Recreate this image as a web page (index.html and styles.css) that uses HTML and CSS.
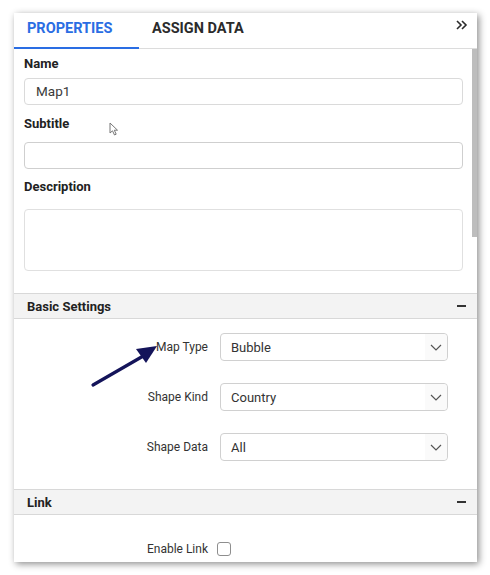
FILE: index.html
```html
<!DOCTYPE html>
<html>
<head>
<meta charset="utf-8">
<link rel="stylesheet" href="styles.css">
</head>
<body>
<div class="panel">
  <div class="tabs">
    <div class="tab active">PROPERTIES</div>
    <div class="tab">ASSIGN DATA</div>
    <svg class="collapse" width="12" height="10" viewBox="0 0 12 10"><path d="M1 1 L5 5 L1 9 M6 1 L10 5 L6 9" fill="none" stroke="#2b2b2b" stroke-width="1.6"/></svg>
  </div>
  <div class="content">
    <div class="field f-name">
      <div class="label">Name</div>
      <div class="input">Map1</div>
    </div>
    <div class="field f-sub">
      <div class="label">Subtitle</div>
      <div class="input"></div>
    </div>
    <div class="field f-desc">
      <div class="label">Description</div>
      <div class="textarea"></div>
    </div>
    <div class="section">
      <span>Basic Settings</span>
      <span class="minus"></span>
    </div>
    <div class="rows">
      <div class="row">
        <div class="rlabel">Map Type</div>
        <div class="select"><span>Bubble</span><span class="chev"><svg width="12" height="7" viewBox="0 0 12 7"><path d="M1 1 L6 6 L11 1" fill="none" stroke="#555" stroke-width="1.2"/></svg></span></div>
      </div>
      <div class="row">
        <div class="rlabel">Shape Kind</div>
        <div class="select"><span>Country</span><span class="chev"><svg width="12" height="7" viewBox="0 0 12 7"><path d="M1 1 L6 6 L11 1" fill="none" stroke="#555" stroke-width="1.2"/></svg></span></div>
      </div>
      <div class="row">
        <div class="rlabel">Shape Data</div>
        <div class="select"><span>All</span><span class="chev"><svg width="12" height="7" viewBox="0 0 12 7"><path d="M1 1 L6 6 L11 1" fill="none" stroke="#555" stroke-width="1.2"/></svg></span></div>
      </div>
    </div>
    <div class="section link">
      <span>Link</span>
      <span class="minus"></span>
    </div>
    <div class="row enable">
      <div class="rlabel">Enable Link</div>
      <div class="check"></div>
    </div>
  </div>
  <div class="thumb"></div>
</div>
<svg class="cursor" width="12" height="14" viewBox="0 0 12 14"><path d="M1 1 L1 11 L3.5 8.8 L5.5 13 L7.2 12.2 L5.3 8.2 L8.5 8.2 Z" fill="#fff" stroke="#777" stroke-width="1"/></svg>
<svg class="pointer" width="80" height="50" viewBox="0 0 80 50"><path d="M7 44 L59 14" stroke="#14145a" stroke-width="3.2" stroke-linecap="round"/><path d="M71 5 L50 8 L60 22 Z" fill="#14145a"/></svg>
</body>
</html>
```
FILE: styles.css
```css
* { box-sizing: border-box; }
body {
  margin: 0;
  background: #fff;
  font-family: Roboto, "Liberation Sans", sans-serif;
  color: #333;
  position: relative;
  width: 490px;
  height: 575px;
  overflow: hidden;
}
.panel {
  position: relative;
  margin: 13px 0 0 14px;
  width: 463px;
  height: 549px;
  background: #fff;
  box-shadow: 2px 2px 7px rgba(0,0,0,0.45);
  overflow: hidden;
}
.tabs {
  height: 36px;
  border-bottom: 1px solid #dcdcdc;
  display: flex;
  align-items: stretch;
  position: relative;
}
.tab {
  font-size: 14.5px;
  font-weight: 700;
  color: #2b2b2b;
  padding: 7px 0 0 13px;
  line-height: 18px;
}
.tab.active {
  width: 125px;
  color: #2a6de3;
  border-bottom: 2px solid #2a6de3;
  margin-bottom: -1px;
}
.collapse {
  position: absolute;
  right: 9px;
  top: 7px;
}
.content {
  width: 463px;
}
.field { padding: 0 14px 0 10px; }
.label {
  font-size: 13px;
  font-weight: 700;
  color: #222;
  line-height: 16px;
}
.f-name { padding-top: 7px; }
.f-name .label { margin-bottom: 6px; }
.f-sub { padding-top: 11px; }
.f-sub .label { margin-bottom: 10px; }
.f-desc { padding-top: 10px; }
.f-desc .label { margin-bottom: 14px; }
.input {
  height: 27px;
  border: 1px solid #dadada;
  border-radius: 4px;
  font-size: 13.5px;
  line-height: 25px;
  padding-left: 11px;
  color: #3a3a3a;
}
.f-sub .input { border-color: #cfcfcf; }
.textarea {
  height: 62px;
  border: 1px solid #e0e0e0;
  border-radius: 4px;
}
.section {
  width: 463px;
  margin-top: 22px;
  height: 26px;
  background: #f3f3f3;
  border-top: 1px solid #d8d8d8;
  border-bottom: 1px solid #d8d8d8;
  display: flex;
  align-items: center;
  justify-content: space-between;
  padding: 0 11px 0 13px;
  font-size: 13px;
  font-weight: 700;
  color: #222;
}
.minus {
  width: 9px;
  height: 2px;
  background: #333;
}
.rows {
  padding-top: 14px;
  display: flex;
  flex-direction: column;
  gap: 22px;
}
.row {
  display: grid;
  grid-template-columns: 194px 228px;
  column-gap: 12px;
  align-items: center;
}
.rlabel {
  text-align: right;
  font-size: 12px;
  color: #333;
}
.select {
  height: 28px;
  border: 1px solid #d0d0d0;
  border-radius: 4px;
  display: flex;
  align-items: center;
  justify-content: space-between;
  font-size: 13px;
  color: #333;
  padding-left: 10px;
}
.chev {
  width: 22px;
  height: 26px;
  background: #fafafa;
  display: flex;
  align-items: center;
  justify-content: center;
  border-radius: 0 4px 4px 0;
}
.section.link { margin-top: 28px; }
.enable {
  margin-top: 27px;
  column-gap: 9px;
}
.check {
  width: 14px;
  height: 14px;
  border: 1px solid #8e8e8e;
  border-radius: 3px;
}
.thumb {
  position: absolute;
  left: 458px;
  top: 36px;
  width: 5px;
  height: 188px;
  background: #bdbdbd;
}
.cursor {
  position: absolute;
  left: 109px;
  top: 122px;
}
.pointer {
  position: absolute;
  left: 86px;
  top: 341px;
}
```
